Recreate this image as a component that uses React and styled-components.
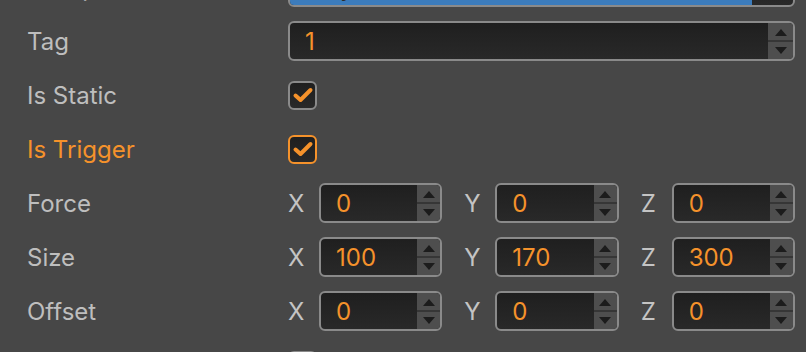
import React from "react";
import styled, { createGlobalStyle, css } from "styled-components";

const ORANGE = "#f5922b";

const GlobalStyle = createGlobalStyle`
  html, body {
    margin: 0;
    padding: 0;
    background: #474747;
    overflow: hidden;
  }
  body {
    font-family: Inter, "Open Sans", "Liberation Sans", sans-serif;
  }
`;

export default function App() {
  return (
    <>
      <GlobalStyle />
      <Panel>
        <Row>
          <Label>Group</Label>
          <Field>
            <Selection>Player</Selection>
            <Tail />
          </Field>
        </Row>
        <Row>
          <Label>Tag</Label>
          <Field>
            <Value>1</Value>
            <Spinner wide />
          </Field>
        </Row>
        <Row>
          <Label>Is Static</Label>
          <Checkbox checked />
        </Row>
        <Row>
          <Label active>Is Trigger</Label>
          <Checkbox checked active />
        </Row>
        <VectorRow label="Force" values={[0, 0, 0]} />
        <VectorRow label="Size" values={[100, 170, 300]} />
        <VectorRow label="Offset" values={[0, 0, 0]} />
        <Row>
          <Label>Fixed Rotation</Label>
          <Checkbox />
        </Row>
      </Panel>
    </>
  );
}

function VectorRow({ label, values }) {
  const axes = ["X", "Y", "Z"];
  return (
    <Row>
      <Label>{label}</Label>
      <Vector>
        {axes.map((axis, i) => (
          <Axis key={axis}>
            <AxisName>{axis}</AxisName>
            <Field>
              <Value>{values[i]}</Value>
              <Spinner />
            </Field>
          </Axis>
        ))}
      </Vector>
    </Row>
  );
}

function Spinner({ wide }) {
  return (
    <SpinBox $wide={wide}>
      <SpinHalf>
        <Arrow $up />
      </SpinHalf>
      <SpinHalf>
        <Arrow />
      </SpinHalf>
    </SpinBox>
  );
}

function Checkbox({ checked, active }) {
  return (
    <Box $active={active}>
      {checked && (
        <svg width="22" height="18" viewBox="0 0 22 18">
          <path
            d="M3.5 9.5 L8.5 14 L18.5 4"
            fill="none"
            stroke={ORANGE}
            strokeWidth="4"
            strokeLinecap="round"
            strokeLinejoin="round"
          />
        </svg>
      )}
    </Box>
  );
}

const Panel = styled.div`
  margin-top: -40px;
  padding: 0 11px 0 27px;
`;

const Row = styled.div`
  display: grid;
  grid-template-columns: 261px 1fr;
  align-items: center;
  height: 54px;
`;

const Label = styled.div`
  font-size: 24px;
  color: ${(p) => (p.active ? ORANGE : "#bebebe")};
  white-space: nowrap;
`;

const Field = styled.div`
  flex: 1;
  display: flex;
  height: 40px;
  box-sizing: border-box;
  border: 2px solid #8a8a8a;
  border-radius: 6px;
  overflow: hidden;
  background: linear-gradient(#1f1f1f, #292929);
`;

const Value = styled.div`
  flex: 1;
  display: flex;
  align-items: center;
  padding-left: 15px;
  font-size: 24px;
  color: ${ORANGE};
`;

const Selection = styled.div`
  width: 462px;
  display: flex;
  align-items: center;
  padding-left: 16px;
  box-sizing: border-box;
  font-size: 24px;
  color: #2a2a2a;
  background: #3c7cbc;
`;

const Tail = styled.div`
  flex: 1;
`;

const SpinBox = styled.div`
  width: ${(p) => (p.$wide ? "25px" : "23px")};
  display: flex;
  flex-direction: column;
  background: #4e4e4e;
`;

const SpinHalf = styled.div`
  flex: 1;
  display: flex;
  align-items: center;
  justify-content: center;
  &:first-child {
    border-bottom: 2px solid #363636;
  }
`;

const Arrow = styled.div`
  width: 0;
  height: 0;
  border-left: 6px solid transparent;
  border-right: 6px solid transparent;
  ${(p) =>
    p.$up
      ? css`
          border-bottom: 7px solid #1c1c1c;
          margin-top: 2px;
        `
      : css`
          border-top: 7px solid #1c1c1c;
        `}
`;

const Box = styled.div`
  width: 29px;
  height: 29px;
  box-sizing: border-box;
  border: 2px solid ${(p) => (p.$active ? ORANGE : "#8a8a8a")};
  border-radius: 6px;
  background: linear-gradient(#1f1f1f, #292929);
  display: flex;
  align-items: center;
  justify-content: center;
`;

const Vector = styled.div`
  display: grid;
  grid-template-columns: repeat(3, 1fr);
  gap: 22px;
`;

const Axis = styled.div`
  display: flex;
  align-items: center;
`;

const AxisName = styled.div`
  width: 31px;
  font-size: 24px;
  color: #c4c4c4;
`;
